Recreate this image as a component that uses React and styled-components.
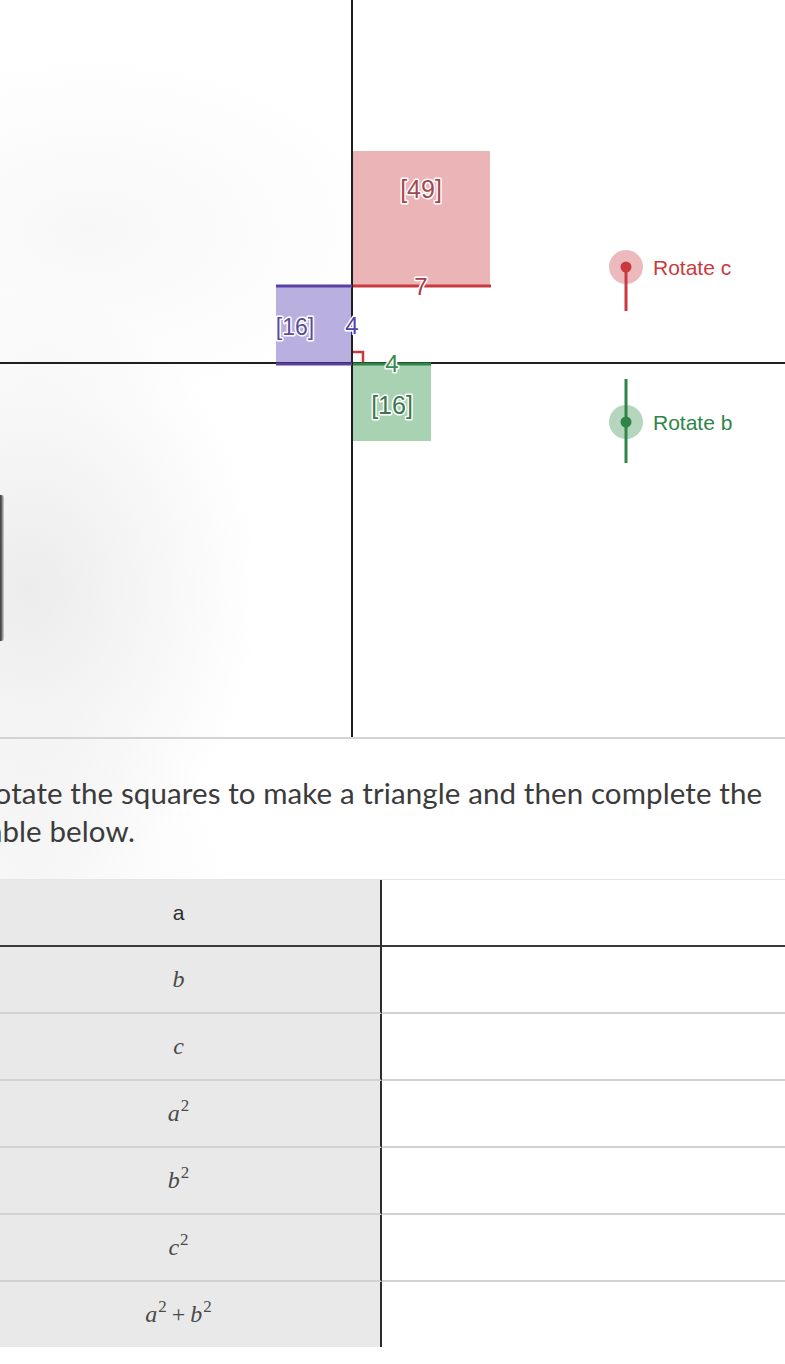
import React from "react";
import styled, { createGlobalStyle } from "styled-components";

const Global = createGlobalStyle`
  html, body { margin: 0; padding: 0; }
  body {
    background-color: #ffffff;
    background-image:
      radial-gradient(ellipse 230px 300px at 30px 590px, rgba(205,205,205,0.38), rgba(255,255,255,0) 100%),
      radial-gradient(ellipse 300px 180px at 90px 230px, rgba(220,220,220,0.22), rgba(255,255,255,0) 100%),
      radial-gradient(ellipse 200px 180px at 30px 880px, rgba(220,220,220,0.25), rgba(255,255,255,0) 100%);
    background-repeat: no-repeat;
    overflow: hidden;
    font-family: "Lato", "Liberation Sans", sans-serif;
  }
`;

const Page = styled.div`
  position: relative;
  width: 808px;
  margin-left: -23px;
  min-height: 1364px;
`;

const EdgeBar = styled.div`
  position: absolute;
  left: 21px;
  top: 495px;
  width: 6px;
  height: 146px;
  border-radius: 3px;
  background: linear-gradient(90deg, #3c3c3c 0%, #4a4a4a 50%, #9a9a9a 80%, #dcdcdc 100%);
`;

const GraphBox = styled.div`
  height: 737px;
  border-bottom: 2px solid #d3d3d3;
  svg { display: block; }
`;

const Prompt = styled.p`
  margin: 0;
  padding: 35px 0 0 0;
  font-family: "Lato", "Liberation Sans", sans-serif;
  font-size: 29.5px;
  line-height: 38px;
  color: #3b3b3b;
  letter-spacing: 0.1px;
`;

const Table = styled.div`
  margin-top: 29px;
  display: grid;
  grid-template-columns: 405px 1fr;
  border-top: 1px solid #e6e6e6;
`;

const Cell = styled.div`
  height: 65px;
  display: flex;
  align-items: center;
  justify-content: center;
  background: ${(p) => (p.$label ? "#e9e9e9" : "#ffffff")};
  border-right: ${(p) => (p.$label ? "2px solid #2c2c2c" : "none")};
  border-bottom: ${(p) =>
    p.$head ? "2px solid #3a3a3a" : p.$last ? "none" : "2px solid #d2d2d2"};
`;

const HeadText = styled.span`
  font-family: "Liberation Sans", Arial, sans-serif;
  font-size: 21px;
  color: #2e2e2e;
`;

const MathText = styled.span`
  font-family: "Liberation Serif", "Times New Roman", serif;
  font-style: italic;
  font-size: 24px;
  color: #4a4a4a;
  sup {
    font-style: normal;
    font-size: 17px;
    vertical-align: 10px;
    line-height: 0;
    margin-left: 1px;
  }
  .op { font-style: normal; margin: 0 5px; }
`;

function Graph() {
  const red = "#c93a3e";
  const green = "#2e8547";
  const purple = "#5a3fa6";
  const halo = { paintOrder: "stroke", stroke: "#ffffff", strokeWidth: 3, strokeLinejoin: "round" };
  return (
    <svg width="808" height="737" viewBox="-23 0 808 737" fontFamily="'Liberation Sans', Arial, sans-serif">
      {/* squares */}
      <rect x="353" y="151" width="137" height="135" fill="#ebb4b7" />
      <rect x="276" y="286" width="76" height="78" fill="#bab0e0" />
      <rect x="353" y="364" width="78" height="77" fill="#a9d2b2" />

      {/* axes */}
      <line x1="352" y1="0" x2="352" y2="737" stroke="#1f1f1f" strokeWidth="2" />
      <line x1="-23" y1="363" x2="785" y2="363" stroke="#1f1f1f" strokeWidth="2" />

      {/* sides */}
      <line x1="353" y1="286" x2="491" y2="286" stroke={red} strokeWidth="3" />
      <line x1="276" y1="286" x2="352" y2="286" stroke={purple} strokeWidth="3" />
      <line x1="276" y1="364" x2="352" y2="364" stroke={purple} strokeWidth="3" />
      <line x1="353" y1="364" x2="431" y2="364" stroke={green} strokeWidth="3" />
      <polyline points="353,352 363,352 363,362" fill="none" stroke={red} strokeWidth="2.5" />

      {/* labels */}
      <text x="421" y="198" textAnchor="middle" fontSize="25" fill="#a24852" style={halo}>[49]</text>
      <text x="421" y="295" textAnchor="middle" fontSize="24" fill="#a0424a" style={halo}>7</text>
      <text x="295" y="335" textAnchor="middle" fontSize="23" fill="#5b4d9c" style={halo}>[16]</text>
      <text x="352" y="334" textAnchor="middle" fontSize="24" fill={purple} style={halo}>4</text>
      <text x="392" y="372" textAnchor="middle" fontSize="24" fill="#3b8a52" style={halo}>4</text>
      <text x="392" y="414" textAnchor="middle" fontSize="25" fill="#3e7650" style={halo}>[16]</text>

      {/* rotate c */}
      <circle cx="626" cy="267" r="17" fill="#e9aeb1" opacity="0.85" />
      <line x1="626" y1="267" x2="626" y2="311" stroke={red} strokeWidth="3" />
      <circle cx="626" cy="267" r="5.5" fill={red} />
      <text x="653" y="275" fontSize="21" fill={red}>Rotate c</text>

      {/* rotate b */}
      <circle cx="626" cy="422" r="17" fill="#a8cfb1" opacity="0.85" />
      <line x1="626" y1="379" x2="626" y2="463" stroke={green} strokeWidth="3" />
      <circle cx="626" cy="422" r="5.5" fill={green} />
      <text x="653" y="430" fontSize="21" fill={green}>Rotate b</text>
    </svg>
  );
}

const rows = [
  { key: "b", label: <MathText>b</MathText> },
  { key: "c", label: <MathText>c</MathText> },
  { key: "a2", label: <MathText>a<sup>2</sup></MathText> },
  { key: "b2", label: <MathText>b<sup>2</sup></MathText> },
  { key: "c2", label: <MathText>c<sup>2</sup></MathText> },
  {
    key: "sum",
    label: (
      <MathText>
        a<sup>2</sup><span className="op">+</span>b<sup>2</sup>
      </MathText>
    ),
  },
];

export default function App() {
  return (
    <>
      <Global />
      <Page>
        <GraphBox>
          <Graph />
        </GraphBox>
        <EdgeBar />
        <Prompt>Rotate the squares to make a triangle and then complete the table below.</Prompt>
        <Table>
          <Cell $label $head>
            <HeadText>a</HeadText>
          </Cell>
          <Cell $head />
          {rows.map((r, i) => (
            <React.Fragment key={r.key}>
              <Cell $label $last={i === rows.length - 1}>{r.label}</Cell>
              <Cell $last={i === rows.length - 1} />
            </React.Fragment>
          ))}
        </Table>
      </Page>
    </>
  );
}
